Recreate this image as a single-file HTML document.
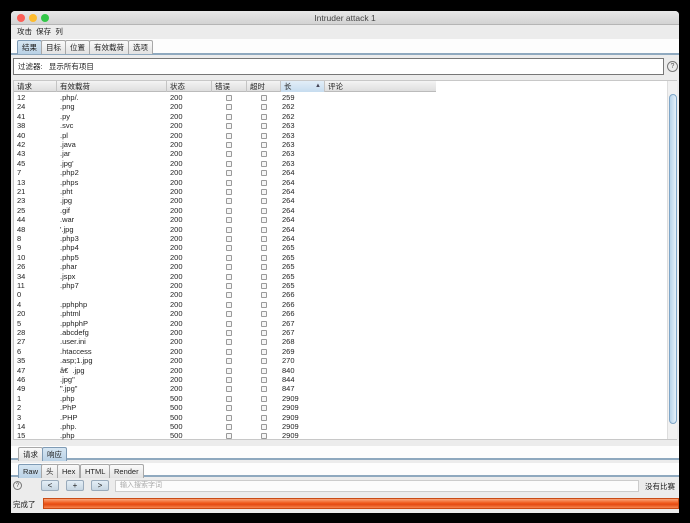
<!DOCTYPE html>
<html><head><meta charset="utf-8"><style>
*{margin:0;padding:0;box-sizing:border-box}
body{width:690px;height:523px;background:#000;position:relative;overflow:hidden;font-family:"Liberation Sans","Noto Sans CJK SC",sans-serif;font-size:8px;color:#222}
.a{position:absolute}
.win{left:11px;top:11px;width:668px;height:502px;background:#ececec;border-radius:4px 4px 0 0;overflow:hidden}
.tb{left:0;top:0;width:668px;height:14px;background:linear-gradient(#e8e8e8,#d3d3d3);border-bottom:1px solid #b5b5b5;text-align:center;font-size:8.5px;line-height:14px;color:#444}
.dot{top:3px;width:8px;height:8px;border-radius:50%}
.tab{top:0;height:14px;border:1px solid #a8a8a8;border-bottom:none;background:linear-gradient(#fafafa,#e2e2e2);font-size:7.5px;line-height:13px;padding:0 4px;border-radius:2px 2px 0 0;white-space:nowrap}
.tab.s{background:linear-gradient(#d6e6f3,#b9d1e6);border-color:#7f9bb5}
.row{position:absolute;left:2px;height:9.4px;line-height:9.4px;font-size:7.5px;width:420px}
.row span{position:absolute;white-space:nowrap}
.cb{position:absolute;top:2px;width:6px;height:6px;border:1px solid #9a9a9a;border-radius:1px;background:#f6f6f6}
.hd span{position:absolute;top:0;height:11px;border-right:1px solid #c4c4c4;padding-left:3px;line-height:11px;font-size:7.5px}
.btn{top:0;height:11px;width:18px;border:1px solid #9ab;border-radius:2px;background:linear-gradient(#e4eef6,#c7d6e3);text-align:center;line-height:9px;font-size:8px}
</style></head><body>
<div class="a win">
 <div class="a tb">Intruder attack 1</div>
 <div class="a dot" style="left:6px;background:#fc5f57"></div>
 <div class="a dot" style="left:18px;background:#fdbc2e"></div>
 <div class="a dot" style="left:30px;background:#33c748"></div>
 <div class="a" style="left:6px;top:15px;font-size:7.5px;line-height:11px">攻击&nbsp;&nbsp;保存&nbsp;&nbsp;列</div>
 <div class="a" style="left:0;top:28px;width:668px;height:16px;background:#fdfdfd;border-bottom:2px solid #8fa9bf"></div>
 <div class="a" style="left:6px;top:29px;height:15px;width:200px">
  <div class="a tab s" style="left:0">结果</div>
  <div class="a tab" style="left:24px">目标</div>
  <div class="a tab" style="left:48px">位置</div>
  <div class="a tab" style="left:72px">有效载荷</div>
  <div class="a tab" style="left:111px">选项</div>
 </div>
 <div class="a" style="left:2px;top:47px;width:651px;height:17px;background:#fff;border:1px solid #777;font-size:7.5px;line-height:15px;padding-left:4px">过滤器:&nbsp;&nbsp;&nbsp;显示所有项目</div>
 <div class="a" style="left:656px;top:50px;width:11px;height:11px;border:1px solid #777;border-radius:50%;font-size:7px;line-height:9px;text-align:center;color:#555">?</div>
 <div class="a" style="left:2px;top:69px;width:664px;height:360px;background:#fff;border:1px solid #c8c8c8"></div>
 <div class="a hd" style="left:3px;top:70px;width:422px;height:11px;background:linear-gradient(#f4f4f4,#dedede);border-bottom:1px solid #bbb">
  <span style="left:0;width:43px">请求</span><span style="left:43px;width:110px">有效载荷</span><span style="left:153px;width:45px">状态</span><span style="left:198px;width:35px">错误</span><span style="left:233px;width:34px">超时</span><span style="left:267px;width:44px;background:linear-gradient(#e2eef8,#c6dcef)">长<b style="position:absolute;right:3px;font-size:6px;color:#445">▲</b></span><span style="left:311px;width:111px;border:none">评论</span>
 </div>
 <div class="a" style="left:656px;top:70px;width:10px;height:358px;background:#f1f1f1;border-left:1px solid #ddd"><div class="a" style="left:1px;top:13px;width:8px;height:330px;border:1px solid #7fa6c8;border-radius:4px;background:linear-gradient(90deg,#b7d3ea,#e6f1fa)"></div></div>
 <div class="a" style="left:4px;top:82px;width:430px;height:346px;font-size:7.5px">
<div class="row" style="top:0px"><span style="left:0">12</span><span style="left:43px">.php/.</span><span style="left:153px">200</span><i class="cb" style="left:209px"></i><i class="cb" style="left:244px"></i><span style="left:265px">259</span></div>
<div class="row" style="top:9.4px"><span style="left:0">24</span><span style="left:43px">.png</span><span style="left:153px">200</span><i class="cb" style="left:209px"></i><i class="cb" style="left:244px"></i><span style="left:265px">262</span></div>
<div class="row" style="top:18.8px"><span style="left:0">41</span><span style="left:43px">.py</span><span style="left:153px">200</span><i class="cb" style="left:209px"></i><i class="cb" style="left:244px"></i><span style="left:265px">262</span></div>
<div class="row" style="top:28.2px"><span style="left:0">38</span><span style="left:43px">.svc</span><span style="left:153px">200</span><i class="cb" style="left:209px"></i><i class="cb" style="left:244px"></i><span style="left:265px">263</span></div>
<div class="row" style="top:37.6px"><span style="left:0">40</span><span style="left:43px">.pl</span><span style="left:153px">200</span><i class="cb" style="left:209px"></i><i class="cb" style="left:244px"></i><span style="left:265px">263</span></div>
<div class="row" style="top:47px"><span style="left:0">42</span><span style="left:43px">.java</span><span style="left:153px">200</span><i class="cb" style="left:209px"></i><i class="cb" style="left:244px"></i><span style="left:265px">263</span></div>
<div class="row" style="top:56.4px"><span style="left:0">43</span><span style="left:43px">.jar</span><span style="left:153px">200</span><i class="cb" style="left:209px"></i><i class="cb" style="left:244px"></i><span style="left:265px">263</span></div>
<div class="row" style="top:65.8px"><span style="left:0">45</span><span style="left:43px">.jpg'</span><span style="left:153px">200</span><i class="cb" style="left:209px"></i><i class="cb" style="left:244px"></i><span style="left:265px">263</span></div>
<div class="row" style="top:75.2px"><span style="left:0">7</span><span style="left:43px">.php2</span><span style="left:153px">200</span><i class="cb" style="left:209px"></i><i class="cb" style="left:244px"></i><span style="left:265px">264</span></div>
<div class="row" style="top:84.6px"><span style="left:0">13</span><span style="left:43px">.phps</span><span style="left:153px">200</span><i class="cb" style="left:209px"></i><i class="cb" style="left:244px"></i><span style="left:265px">264</span></div>
<div class="row" style="top:94px"><span style="left:0">21</span><span style="left:43px">.pht</span><span style="left:153px">200</span><i class="cb" style="left:209px"></i><i class="cb" style="left:244px"></i><span style="left:265px">264</span></div>
<div class="row" style="top:103.4px"><span style="left:0">23</span><span style="left:43px">.jpg</span><span style="left:153px">200</span><i class="cb" style="left:209px"></i><i class="cb" style="left:244px"></i><span style="left:265px">264</span></div>
<div class="row" style="top:112.8px"><span style="left:0">25</span><span style="left:43px">.gif</span><span style="left:153px">200</span><i class="cb" style="left:209px"></i><i class="cb" style="left:244px"></i><span style="left:265px">264</span></div>
<div class="row" style="top:122.2px"><span style="left:0">44</span><span style="left:43px">.war</span><span style="left:153px">200</span><i class="cb" style="left:209px"></i><i class="cb" style="left:244px"></i><span style="left:265px">264</span></div>
<div class="row" style="top:131.6px"><span style="left:0">48</span><span style="left:43px">'.jpg</span><span style="left:153px">200</span><i class="cb" style="left:209px"></i><i class="cb" style="left:244px"></i><span style="left:265px">264</span></div>
<div class="row" style="top:141px"><span style="left:0">8</span><span style="left:43px">.php3</span><span style="left:153px">200</span><i class="cb" style="left:209px"></i><i class="cb" style="left:244px"></i><span style="left:265px">264</span></div>
<div class="row" style="top:150.4px"><span style="left:0">9</span><span style="left:43px">.php4</span><span style="left:153px">200</span><i class="cb" style="left:209px"></i><i class="cb" style="left:244px"></i><span style="left:265px">265</span></div>
<div class="row" style="top:159.8px"><span style="left:0">10</span><span style="left:43px">.php5</span><span style="left:153px">200</span><i class="cb" style="left:209px"></i><i class="cb" style="left:244px"></i><span style="left:265px">265</span></div>
<div class="row" style="top:169.2px"><span style="left:0">26</span><span style="left:43px">.phar</span><span style="left:153px">200</span><i class="cb" style="left:209px"></i><i class="cb" style="left:244px"></i><span style="left:265px">265</span></div>
<div class="row" style="top:178.6px"><span style="left:0">34</span><span style="left:43px">.jspx</span><span style="left:153px">200</span><i class="cb" style="left:209px"></i><i class="cb" style="left:244px"></i><span style="left:265px">265</span></div>
<div class="row" style="top:188px"><span style="left:0">11</span><span style="left:43px">.php7</span><span style="left:153px">200</span><i class="cb" style="left:209px"></i><i class="cb" style="left:244px"></i><span style="left:265px">265</span></div>
<div class="row" style="top:197.4px"><span style="left:0">0</span><span style="left:153px">200</span><i class="cb" style="left:209px"></i><i class="cb" style="left:244px"></i><span style="left:265px">266</span></div>
<div class="row" style="top:206.8px"><span style="left:0">4</span><span style="left:43px">.pphphp</span><span style="left:153px">200</span><i class="cb" style="left:209px"></i><i class="cb" style="left:244px"></i><span style="left:265px">266</span></div>
<div class="row" style="top:216.2px"><span style="left:0">20</span><span style="left:43px">.phtml</span><span style="left:153px">200</span><i class="cb" style="left:209px"></i><i class="cb" style="left:244px"></i><span style="left:265px">266</span></div>
<div class="row" style="top:225.6px"><span style="left:0">5</span><span style="left:43px">.pphphP</span><span style="left:153px">200</span><i class="cb" style="left:209px"></i><i class="cb" style="left:244px"></i><span style="left:265px">267</span></div>
<div class="row" style="top:235px"><span style="left:0">28</span><span style="left:43px">.abcdefg</span><span style="left:153px">200</span><i class="cb" style="left:209px"></i><i class="cb" style="left:244px"></i><span style="left:265px">267</span></div>
<div class="row" style="top:244.4px"><span style="left:0">27</span><span style="left:43px">.user.ini</span><span style="left:153px">200</span><i class="cb" style="left:209px"></i><i class="cb" style="left:244px"></i><span style="left:265px">268</span></div>
<div class="row" style="top:253.8px"><span style="left:0">6</span><span style="left:43px">.htaccess</span><span style="left:153px">200</span><i class="cb" style="left:209px"></i><i class="cb" style="left:244px"></i><span style="left:265px">269</span></div>
<div class="row" style="top:263.2px"><span style="left:0">35</span><span style="left:43px">.asp;1.jpg</span><span style="left:153px">200</span><i class="cb" style="left:209px"></i><i class="cb" style="left:244px"></i><span style="left:265px">270</span></div>
<div class="row" style="top:272.6px"><span style="left:0">47</span><span style="left:43px">â€&nbsp;&nbsp;.jpg</span><span style="left:153px">200</span><i class="cb" style="left:209px"></i><i class="cb" style="left:244px"></i><span style="left:265px">840</span></div>
<div class="row" style="top:282px"><span style="left:0">46</span><span style="left:43px">.jpg"</span><span style="left:153px">200</span><i class="cb" style="left:209px"></i><i class="cb" style="left:244px"></i><span style="left:265px">844</span></div>
<div class="row" style="top:291.4px"><span style="left:0">49</span><span style="left:43px">".jpg"</span><span style="left:153px">200</span><i class="cb" style="left:209px"></i><i class="cb" style="left:244px"></i><span style="left:265px">847</span></div>
<div class="row" style="top:300.8px"><span style="left:0">1</span><span style="left:43px">.php</span><span style="left:153px">500</span><i class="cb" style="left:209px"></i><i class="cb" style="left:244px"></i><span style="left:265px">2909</span></div>
<div class="row" style="top:310.2px"><span style="left:0">2</span><span style="left:43px">.PhP</span><span style="left:153px">500</span><i class="cb" style="left:209px"></i><i class="cb" style="left:244px"></i><span style="left:265px">2909</span></div>
<div class="row" style="top:319.6px"><span style="left:0">3</span><span style="left:43px">.PHP</span><span style="left:153px">500</span><i class="cb" style="left:209px"></i><i class="cb" style="left:244px"></i><span style="left:265px">2909</span></div>
<div class="row" style="top:329px"><span style="left:0">14</span><span style="left:43px">.php.</span><span style="left:153px">500</span><i class="cb" style="left:209px"></i><i class="cb" style="left:244px"></i><span style="left:265px">2909</span></div>
<div class="row" style="top:338.4px"><span style="left:0">15</span><span style="left:43px">.php</span><span style="left:153px">500</span><i class="cb" style="left:209px"></i><i class="cb" style="left:244px"></i><span style="left:265px">2909</span></div>
 </div>
 <div class="a" style="left:0;top:435px;width:668px;height:14px;background:#fdfdfd;border-bottom:2px solid #8fa9bf"></div>
 <div class="a" style="left:7px;top:436px;width:100px;height:14px">
  <div class="a tab" style="left:0">请求</div>
  <div class="a tab s" style="left:24px">响应</div>
 </div>
 <div class="a" style="left:0;top:452px;width:668px;height:14px;background:#fdfdfd;border-bottom:2px solid #8fa9bf"></div>
 <div class="a" style="left:7px;top:453px;width:200px;height:14px">
  <div class="a tab s" style="left:0">Raw</div>
  <div class="a tab" style="left:23px">头</div>
  <div class="a tab" style="left:39px">Hex</div>
  <div class="a tab" style="left:62px">HTML</div>
  <div class="a tab" style="left:91px">Render</div>
 </div>
 <div class="a" style="left:2px;top:470px;width:9px;height:9px;border:1px solid #777;border-radius:50%;font-size:6.5px;line-height:7px;text-align:center;color:#555">?</div>
 <div class="a" style="left:30px;top:469px;width:80px;height:12px">
  <div class="a btn" style="left:0">&lt;</div>
  <div class="a btn" style="left:25px">+</div>
  <div class="a btn" style="left:50px">&gt;</div>
 </div>
 <div class="a" style="left:104px;top:469px;width:524px;height:12px;background:#fcfcfc;border:1px solid #ccc;font-size:7px;line-height:10px;color:#aaa;padding-left:4px">输入搜索字词</div>
 <div class="a" style="left:634px;top:470px;font-size:7.5px;white-space:nowrap">没有比赛</div>
 <div class="a" style="left:2px;top:488px;font-size:7.5px;white-space:nowrap">完成了</div>
 <div class="a" style="left:32px;top:487px;width:636px;height:11px;background:linear-gradient(#f9a57a,#f05a1c 45%,#e34a12 60%,#f8844c);border:1px solid #c84a15"></div>
</div>
</body></html>
